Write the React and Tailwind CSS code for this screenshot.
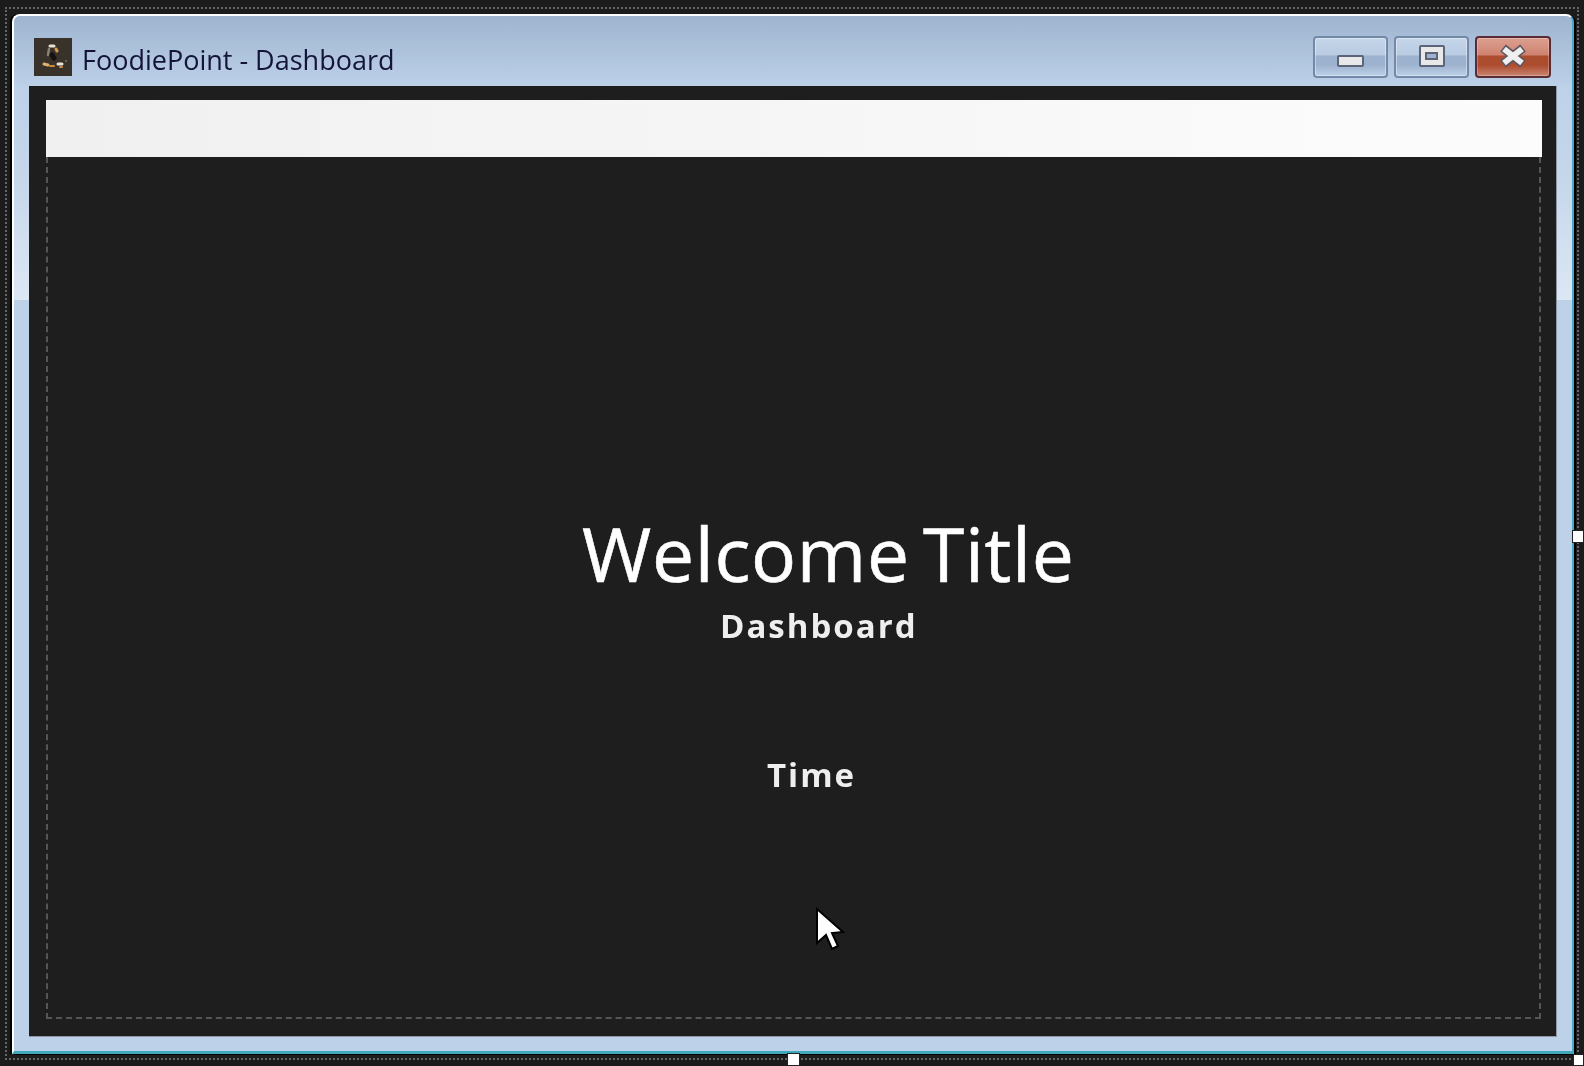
import React from "react";

function WindowButton({ close, children }) {
  return (
    <div
      className={
        close
          ? "flex h-[42px] w-[76px] items-center justify-center rounded-[4px] border-2 border-[#5a2a35] bg-[linear-gradient(to_bottom,#dc9f90_0%,#cf8370_45%,#ad4d30_47%,#ad4d30_72%,#c98470_100%)] shadow-[inset_0_0_0_1px_rgba(255,255,255,0.25)] blur-[0.4px]"
          : "flex h-[42px] w-[75px] items-center justify-center rounded-[4px] border-2 border-[#7489a8] bg-[linear-gradient(to_bottom,#c5d6ea_0%,#b9cbe2_45%,#9db2ce_47%,#9db2ce_70%,#bdd0e8_100%)] shadow-[inset_0_0_0_1px_rgba(255,255,255,0.4)] blur-[0.4px]"
      }
    >
      {children}
    </div>
  );
}

function AppIcon() {
  return (
    <div className="h-[38px] w-[38px] shrink-0 bg-[#38322b]">
      <svg className="blur-[0.7px]" width="38" height="38" viewBox="0 0 38 38" fill="none" strokeLinecap="round">
        <path d="M16 8 L20 8" stroke="#e8e2d6" strokeWidth="3" />
        <path d="M22 11 L23 13" stroke="#d99a4a" strokeWidth="3" />
        <path d="M15 11 L14 17" stroke="#8a8074" strokeWidth="2.5" />
        <path d="M18 17 L20 20" stroke="#15120f" strokeWidth="5" />
        <path d="M10 26 L14 27" stroke="#e0b070" strokeWidth="3" />
        <path d="M16 28 L20 28" stroke="#d08a3c" strokeWidth="2" />
        <path d="M24 26 L28 26" stroke="#ece4d4" strokeWidth="3" />
        <path d="M26 29 L28 29" stroke="#c98a44" strokeWidth="2" />
        <circle cx="32" cy="23" r="1" fill="#77706a" />
      </svg>
    </div>
  );
}

export default function App() {
  return (
    <div className="h-[1066px] w-[1584px] overflow-hidden bg-[#1c1c1c] pl-[5px] pt-[7px] font-['Open_Sans','Noto_Sans',sans-serif]">
      <div className="relative h-[1053px] w-[1574px] border-2 border-dotted border-[#666] pb-[4px] pl-[5px] pr-[3px] pt-[5px]">
        {/* window */}
        <div className="flex h-full w-full flex-col rounded-t-[8px] border-2 border-b-[3px] border-l-white border-t-white border-r-[#49a7c9] border-b-[#3fa9bb] bg-[#bdd1e9] shadow-[-2px_0_0_#000,2px_1px_0_#000]">
          {/* title bar */}
          <div className="flex h-[70px] shrink-0 items-start rounded-t-[6px] bg-[linear-gradient(to_bottom,#9fb4cf,#bcd0e8)] pl-[20px] pr-[21px] pt-[22px]">
            <AppIcon />
            <span className="ml-[10px] mt-[4px] text-[27px] leading-[36px] text-[#14143a] blur-[0.4px]">FoodiePoint - Dashboard</span>
            <div className="ml-auto -mt-[2px] flex gap-[6px]">
              <WindowButton>
                <div className="mt-[8px] h-[12px] w-[27px] rounded-[2px] border-2 border-[#5b6478] bg-[#e8e8e8]" />
              </WindowButton>
              <WindowButton>
                <div className="mb-[2px] flex h-[22px] w-[26px] items-center justify-center rounded-[2px] border-2 border-[#5b6478] bg-[#e8e8e8]">
                  <div className="h-[8px] w-[13px] border-2 border-[#5b6478] bg-[#9db2ce]" />
                </div>
              </WindowButton>
              <WindowButton close>
                <svg className="mb-[2px]" width="30" height="24" viewBox="0 0 30 24" fill="none">
                  <path d="M5 4 L25 20 M25 4 L5 20" stroke="#5b5560" strokeWidth="9" />
                  <path d="M6 5 L24 19 M24 5 L6 19" stroke="#efefef" strokeWidth="6" />
                </svg>
              </WindowButton>
            </div>
          </div>

          {/* middle */}
          <div className="flex min-h-0 flex-1">
            <div className="w-[15px] shrink-0">
              <div className="h-[214px] bg-[linear-gradient(to_bottom,#bdd1e9_0%,#c6d7eb_45%,#dce7f4_100%)]" />
            </div>
            <div className="flex min-w-0 flex-1 flex-col border-b border-r border-[#8c96a5] bg-[#1e1e1e] pb-[17px] pl-[17px] pr-[14px] pt-[14px]">
              <div className="h-[57px] shrink-0 bg-[linear-gradient(to_right,#f0f0f0,#fcfcfc)]" />
              <div className="mr-[1px] flex min-h-0 flex-1 flex-col border-2 border-t-0 border-dashed border-[#555] text-white">
                <div className="ml-[534px] mt-[350px] text-[75px] font-medium leading-[92px] tracking-[0.7px] [word-spacing:-7px] [-webkit-text-stroke:0.6px_#fff] blur-[0.5px]">Welcome Title</div>
                <div className="ml-[672px] mt-[6px] text-[33px] font-bold leading-[42px] tracking-[2px] text-[#eeeeee] blur-[0.4px]">Dashboard</div>
                <div className="ml-[719px] mt-[107px] text-[33px] font-bold leading-[42px] tracking-[2px] text-[#eeeeee] blur-[0.4px]">Time</div>
              </div>
            </div>
            <div className="w-[15px] shrink-0">
              <div className="h-[214px] bg-[linear-gradient(to_bottom,#bdd1e9_0%,#c6d7eb_45%,#dce7f4_100%)]" />
            </div>
          </div>
          <div className="h-[14px] shrink-0" />
        </div>

        {/* cursor */}
        <svg className="absolute left-[808px] top-[898px]" width="30" height="46" viewBox="0 0 30 46">
          <path d="M2 2 L2 36 L11 28 L17 42 L23 39 L17 26 L28 25 Z" fill="#ffffff" stroke="#000000" strokeWidth="2" />
        </svg>

        {/* selection handles */}
        <div className="absolute left-[780px] top-[1044px] h-[13px] w-[13px] border border-[#222] bg-white" />
        <div className="absolute left-[1565px] top-[521px] h-[13px] w-[12px] border border-[#222] bg-white" />
        <div className="absolute left-[1566px] top-[1045px] h-[12px] w-[11px] border border-[#222] bg-white" />
      </div>
    </div>
  );
}
